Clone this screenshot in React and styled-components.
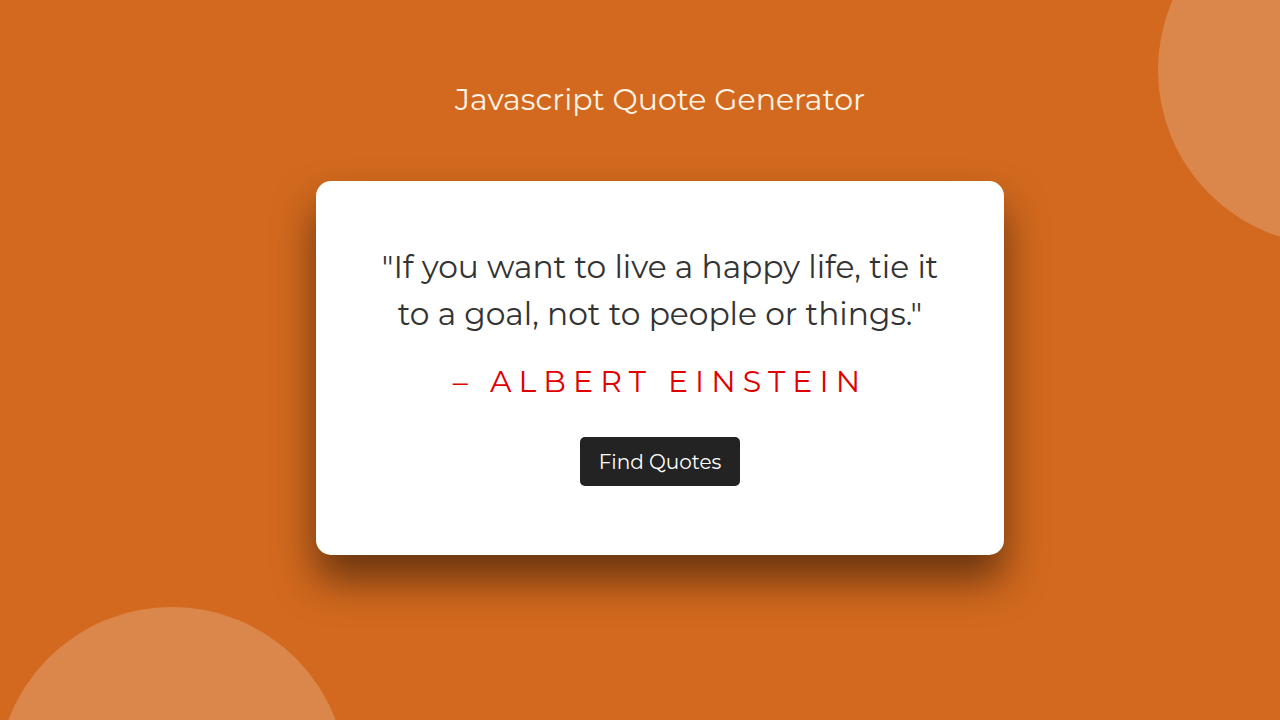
import React from "react";
import styled, { createGlobalStyle } from "styled-components";

const Global = createGlobalStyle`
  html, body { margin: 0; padding: 0; }
  body {
    background: #d2691e;
    font-family: "Montserrat", "DejaVu Sans", sans-serif;
    overflow: hidden;
  }
`;

const Page = styled.main`
  position: relative;
  width: 1280px;
  height: 720px;
  overflow: hidden;
  background: #d2691e;
  display: flex;
  flex-direction: column;
  align-items: center;
  padding-left: 40px;
  box-sizing: border-box;
`;

const Blob = styled.div`
  position: absolute;
  width: 350px;
  height: 350px;
  border-radius: 50%;
  background: rgba(255, 255, 255, 0.2);
  left: ${(p) => p.$x}px;
  top: ${(p) => p.$y}px;
`;

const Title = styled.h1`
  margin: 80px 0 0;
  font-size: 30px;
  line-height: 40px;
  font-weight: 400;
  color: #fff3e6;
  position: relative;
  z-index: 1;
`;

const Card = styled.section`
  position: relative;
  z-index: 1;
  margin-top: 61px;
  width: 688px;
  height: 374px;
  box-sizing: border-box;
  background: #fff;
  border-radius: 15px;
  box-shadow: 0 25px 40px rgba(0, 0, 0, 0.5);
  display: flex;
  flex-direction: column;
  align-items: center;
  padding-top: 63px;
`;

const Quote = styled.p`
  margin: 0;
  width: 580px;
  text-align: center;
  font-size: 31.3px;
  line-height: 47px;
  color: #333;
  font-weight: 400;
`;

const Author = styled.p`
  margin: 26px 0 0;
  font-size: 30px;
  line-height: 36px;
  letter-spacing: 7.1px;
  color: #e00000;
  text-transform: uppercase;
`;

const Button = styled.button`
  margin-top: 37px;
  width: 160px;
  height: 49px;
  border: none;
  border-radius: 5px;
  background: #232323;
  color: #fff;
  font-family: inherit;
  font-size: 20px;
  cursor: pointer;
`;

export default function App() {
  return (
    <>
      <Global />
      <Page>
        <Blob $x={1158} $y={-105} />
        <Blob $x={-3} $y={607} />
        <Title>Javascript Quote Generator</Title>
        <Card>
          <Quote>
            "If you want to live a happy life, tie it to a goal, not to people or things."
          </Quote>
          <Author>– Albert Einstein</Author>
          <Button>Find Quotes</Button>
        </Card>
      </Page>
    </>
  );
}
